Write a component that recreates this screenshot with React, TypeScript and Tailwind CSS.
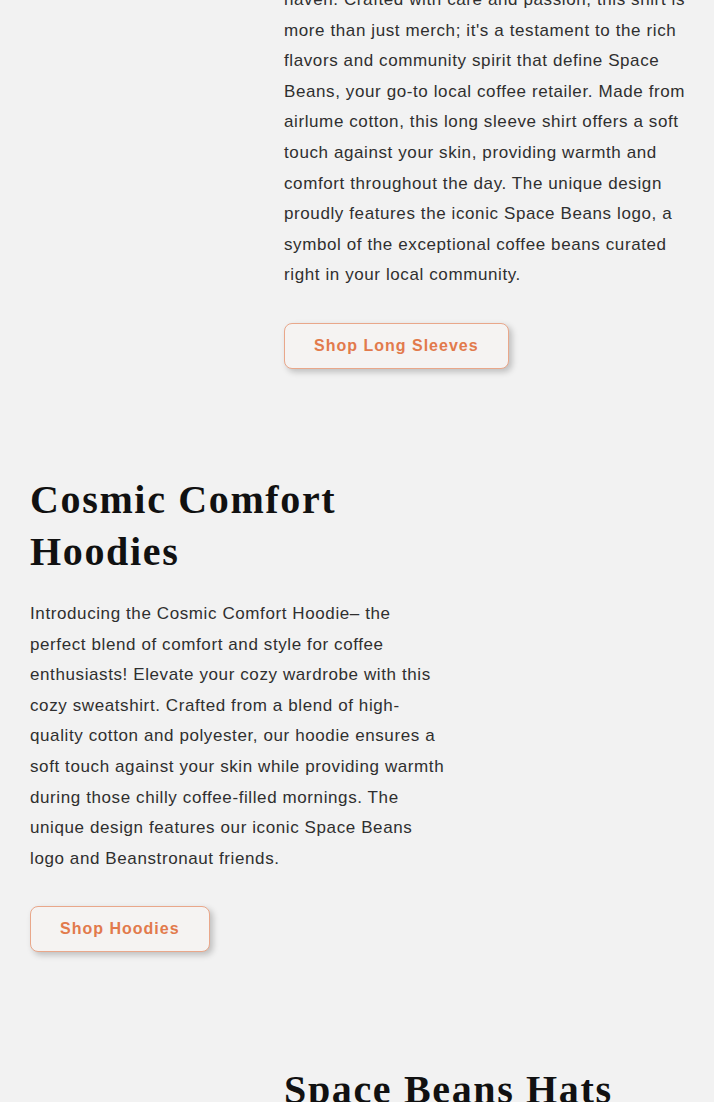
import React from 'react'

const body = "font-['Liberation_Sans',Arial,sans-serif] text-[17px] leading-[30.6px] tracking-[0.6px] text-[#2f2f2f]"
const heading = "font-['Liberation_Serif','Times_New_Roman',serif] font-bold text-[40px] leading-[52px] tracking-[1.65px] text-[#111]"

function ShopButton({ label }: { label: string }) {
    return (
        <a href="#" className="inline-block rounded-lg border border-[#e9a78a] bg-[#f5f3f2] px-[29px] py-[11px] font-['Liberation_Sans',Arial,sans-serif] text-[16px] font-bold leading-[22px] tracking-[1px] text-[#e27a4c] shadow-[3px_3px_6px_rgba(0,0,0,0.22)]">
            {label}
        </a>
    )
}

export default function App() {
    return (
        <div className="min-h-[1102px] overflow-hidden bg-[#f2f2f2] pl-[30px] pr-[22px]">
            {/* long sleeves (scrolled, heading cut off) */}
            <section className="-mt-[15px] flex gap-[30px]">
                <div className="w-[224px] shrink-0" />
                <div className="flex-1">
                    <p className={body}>
                        haven. Crafted with care and passion, this shirt is more than just merch; it's a testament to the rich flavors and community spirit that define Space Beans, your go-to local coffee retailer. Made from airlume cotton, this long sleeve shirt offers a soft touch against your skin, providing warmth and comfort throughout the day. The unique design proudly features the iconic Space Beans logo, a symbol of the exceptional coffee beans curated right in your local community.
                    </p>
                    <div className="mt-[32px]">
                        <ShopButton label="Shop Long Sleeves" />
                    </div>
                </div>
            </section>

            {/* hoodies */}
            <section className="mt-[105px] flex gap-[30px]">
                <div className="w-[418px] shrink-0">
                    <h2 className={heading}>Cosmic Comfort Hoodies</h2>
                    <p className={`${body} mt-[21px]`}>
                        Introducing the Cosmic Comfort Hoodie– the perfect blend of comfort and style for coffee enthusiasts! Elevate your cozy wardrobe with this cozy sweatshirt. Crafted from a blend of high-quality cotton and polyester, our hoodie ensures a soft touch against your skin while providing warmth during those chilly coffee-filled mornings. The unique design features our iconic Space Beans logo and Beanstronaut friends.
                    </p>
                    <div className="mt-[32px]">
                        <ShopButton label="Shop Hoodies" />
                    </div>
                </div>
                <div className="flex-1" />
            </section>

            {/* hats */}
            <section className="mt-[112px] flex gap-[30px]">
                <div className="w-[224px] shrink-0" />
                <div className="flex-1">
                    <h2 className={heading}>Space Beans Hats</h2>
                </div>
            </section>
        </div>
    )
}
